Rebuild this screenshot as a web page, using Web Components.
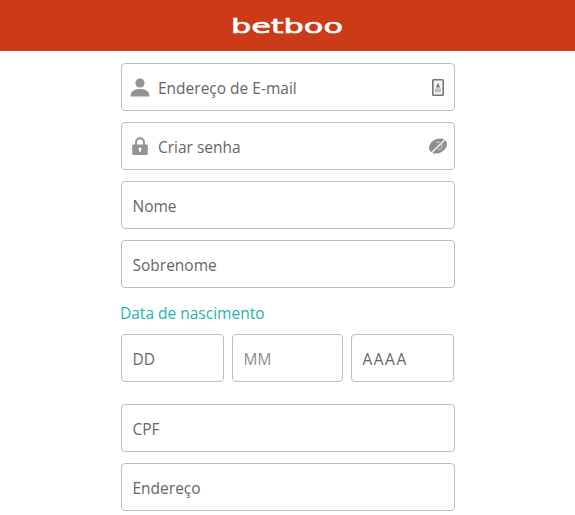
<!DOCTYPE html>
<html lang="pt">
<head>
<meta charset="utf-8">
<title>betboo</title>
<style>
    html, body { margin: 0; background: #fff; }
    body { font-family: "Open Sans", "Noto Sans", sans-serif; overflow: hidden; }
</style>
</head>
<body>
<site-header></site-header>
<signup-form>
    <form-field label="Endereço de E-mail" lead="user" trail="card"></form-field>
    <form-field label="Criar senha" lead="lock" trail="eye"></form-field>
    <form-field label="Nome"></form-field>
    <form-field label="Sobrenome"></form-field>
    <date-group label="Data de nascimento">
        <form-field label="DD"></form-field>
        <form-field label="MM" muted></form-field>
        <form-field label="AAAA" wide></form-field>
    </date-group>
    <form-field label="CPF"></form-field>
    <form-field label="Endereço"></form-field>
</signup-form>
<script>
const ICONS = {
    user: `<svg width="20" height="19" viewBox="0 0 20 19"><circle cx="10" cy="5" r="4.6" fill="#939393"/><path d="M0.5 18.5 C0.5 13 4.5 11 10 11 C15.5 11 19.5 13 19.5 18.5 Z" fill="#939393"/></svg>`,
    lock: `<svg width="16" height="18" viewBox="0 0 16 18"><path d="M4 8 V5.2 a4 4 0 0 1 8 0 V8" fill="none" stroke="#939393" stroke-width="2"/><path fill-rule="evenodd" d="M1 7.5 H15 a0.8 0.8 0 0 1 .8 .8 V17.2 a0.8 0.8 0 0 1 -.8 .8 H1 a0.8 0.8 0 0 1 -.8 -.8 V8.3 a0.8 0.8 0 0 1 .8 -.8 Z M8 10.5 a1.5 1.5 0 0 0 -.8 2.8 V15 H8.8 V13.3 a1.5 1.5 0 0 0 -.8 -2.8 Z" fill="#939393"/></svg>`,
    card: `<svg width="12" height="17" viewBox="0 0 12 17"><rect x="0.8" y="0.8" width="10.4" height="15.4" rx="0.8" fill="#f4f4f4" stroke="#757575" stroke-width="1.6"/><path d="M6 3.4 L8 8.6 H4 Z" fill="#777"/><rect x="3" y="9.4" width="6" height="3.8" fill="#bdbdbd"/></svg>`,
    eye: `<svg width="20" height="19" viewBox="0 0 20 19"><ellipse cx="10" cy="9" rx="9.4" ry="7" transform="rotate(-28 10 9)" fill="#8f8f8f"/><path d="M1 18.2 C6 13.5 11 8.5 17.5 2" fill="none" stroke="#fff" stroke-width="1.1"/><path d="M8.5 5.5 A4 4 0 0 1 14 9.5 A4 4 0 0 1 9.5 12.5" fill="none" stroke="#d6d6d6" stroke-width="1"/></svg>`
};

class SiteHeader extends HTMLElement {
    connectedCallback() {
        this.attachShadow({ mode: 'open' });
        this.shadowRoot.innerHTML = `
            <style>
                :host {
                    display: flex;
                    justify-content: center;
                    align-items: center;
                    height: 51px;
                    background: #cb3b18;
                }
                .logo {
                    color: #fff;
                    font-family: "DejaVu Sans", sans-serif;
                    font-size: 20px;
                    line-height: 1;
                    -webkit-text-stroke: 0.6px #fff;
                    transform: scaleX(1.6);
                }
            </style>
            <span class="logo">betboo</span>
        `;
    }
}

class FormField extends HTMLElement {
    connectedCallback() {
        const lead = this.getAttribute('lead');
        const trail = this.getAttribute('trail');
        this.attachShadow({ mode: 'open' });
        this.shadowRoot.innerHTML = `
            <style>
                :host {
                    display: flex;
                    align-items: center;
                    box-sizing: border-box;
                    height: 48px;
                    padding: 0 11px 0 10.5px;
                    background: #fff;
                    border: 1px solid #bdbdbd;
                    border-radius: 4px;
                    color: #666;
                    font-size: 15.5px;
                }
                :host([lead]) { padding: 0 6px 0 7px; }
                :host([muted]) { color: #8c8c8c; }
                :host([wide]) { letter-spacing: 1.5px; }
                .lead { display: flex; justify-content: center; width: 21px; margin-right: 8px; }
                .text { flex: 1; white-space: nowrap; position: relative; top: 1px; }
                .trail { display: flex; justify-content: center; width: 20px; margin-left: -2px; }
            </style>
            ${lead ? `<span class="lead">${ICONS[lead]}</span>` : ''}
            <span class="text">${this.getAttribute('label')}</span>
            ${trail ? `<span class="trail">${ICONS[trail]}</span>` : ''}
        `;
    }
}

class DateGroup extends HTMLElement {
    connectedCallback() {
        this.attachShadow({ mode: 'open' });
        this.shadowRoot.innerHTML = `
            <style>
                :host { display: block; margin-bottom: 11px; }
                .title {
                    color: #1fb5a8;
                    font-size: 15.5px;
                    line-height: 20px;
                    margin: 0 0 11px -1px;
                    padding-top: 4px;
                }
                .row {
                    display: grid;
                    grid-template-columns: 103px 111px 103px;
                    column-gap: 8px;
                }
            </style>
            <div class="title">${this.getAttribute('label')}</div>
            <div class="row"><slot></slot></div>
        `;
    }
}

class SignupForm extends HTMLElement {
    connectedCallback() {
        this.attachShadow({ mode: 'open' });
        this.shadowRoot.innerHTML = `
            <style>
                :host {
                    display: grid;
                    grid-template-columns: 334px;
                    row-gap: 11px;
                    padding: 12px 0 0 121px;
                }
            </style>
            <slot></slot>
        `;
    }
}

customElements.define('site-header', SiteHeader);
customElements.define('form-field', FormField);
customElements.define('date-group', DateGroup);
customElements.define('signup-form', SignupForm);
</script>
</body>
</html>
